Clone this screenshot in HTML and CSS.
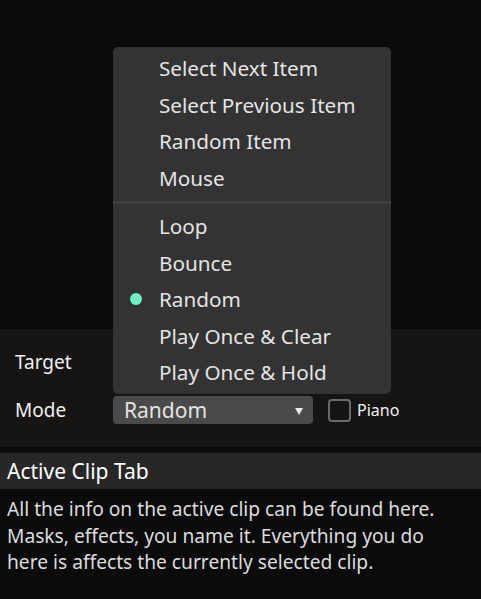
FILE: index.html
```html
<!DOCTYPE html>
<html lang="en">

<head>
    <meta charset="UTF-8">
    <meta name="viewport" content="width=device-width, initial-scale=1.0">
    <title>Clip Mode</title>
    <link rel="stylesheet" href="styles.css">
</head>

<body>
    <div class="viewer"></div>

    <div class="panel">
        <div class="row">
            <span class="label">Target</span>
        </div>
        <div class="row">
            <span class="label">Mode</span>
            <div class="select">
                <span>Random</span>
                <span class="arrow"></span>
            </div>
            <label class="check">
                <span class="box"></span> Piano
            </label>
        </div>
    </div>

    <div class="tab-header">Active Clip Tab</div>
    <div class="tab-body">
        All the info on the active clip can be found here. Masks, effects, you name it. Everything you do here is affects the currently selected clip.
    </div>

    <!-- popup for the Mode select -->
    <ul class="menu">
        <li>Select Next Item</li>
        <li>Select Previous Item</li>
        <li>Random Item</li>
        <li>Mouse</li>
        <li class="sep"></li>
        <li>Loop</li>
        <li>Bounce</li>
        <li class="checked">Random</li>
        <li>Play Once &amp; Clear</li>
        <li>Play Once &amp; Hold</li>
    </ul>
</body>

</html>
```

FILE: styles.css
```css
body {
    margin: 0;
    background-color: #0b0b0b;
    font-family: "Noto Sans", "Open Sans", sans-serif;
    color: #e6e6e6;
    position: relative;
}

.viewer {
    height: 329px;
    background-color: #0b0b0b;
}

.panel {
    height: 118px;
    background-color: #161514;
    display: flex;
    flex-direction: column;
    justify-content: flex-end;
    padding: 0 0 23px 15px;
    box-sizing: border-box;
    gap: 20px;
}

.row {
    display: flex;
    align-items: center;
    height: 28px;
}

.label {
    width: 98px;
    font-size: 19px;
    color: #f0f0f0;
}

.select {
    width: 200px;
    height: 28px;
    box-sizing: border-box;
    padding: 0 10px 0 11px;
    background-color: #4a4a4a;
    border-radius: 4px;
    display: flex;
    align-items: center;
    justify-content: space-between;
    font-size: 21px;
    color: #e4e4e4;
}

.arrow {
    width: 0;
    height: 0;
    border-left: 4px solid transparent;
    border-right: 4px solid transparent;
    border-top: 7px solid #e8e8e8;
    margin-top: 3px;
}

.check {
    display: flex;
    align-items: center;
    gap: 6px;
    margin-left: 15px;
    font-size: 16px;
    color: #f0f0f0;
}

.box {
    width: 23px;
    height: 23px;
    box-sizing: border-box;
    border: 2px solid #6b6b6b;
    border-radius: 4px;
}

.tab-header {
    margin-top: 6px;
    height: 36px;
    line-height: 36px;
    padding-left: 7px;
    background-color: #272727;
    color: #ffffff;
    font-size: 21px;
}

.tab-body {
    padding: 7px 30px 0 7px;
    font-size: 19.2px;
    line-height: 26.5px;
    color: #dcdcdc;
}

.menu {
    position: absolute;
    left: 113px;
    top: 47px;
    width: 278px;
    margin: 0;
    padding: 3px 0 3.5px;
    list-style: none;
    background-color: #333333;
    border-radius: 5px;
    font-size: 20.7px;
    color: #e4e4e4;
}

.menu li {
    height: 36.5px;
    line-height: 36.5px;
    padding-left: 46px;
    position: relative;
}

.menu li.sep {
    height: 3px;
    padding: 0;
    margin: 5px 0 4px;
    background-color: #3f3f3f;
}

.menu li.checked::before {
    content: "";
    position: absolute;
    left: 17px;
    top: 12px;
    width: 12px;
    height: 12px;
    border-radius: 50%;
    background-color: #6ff3c6;
}
```
